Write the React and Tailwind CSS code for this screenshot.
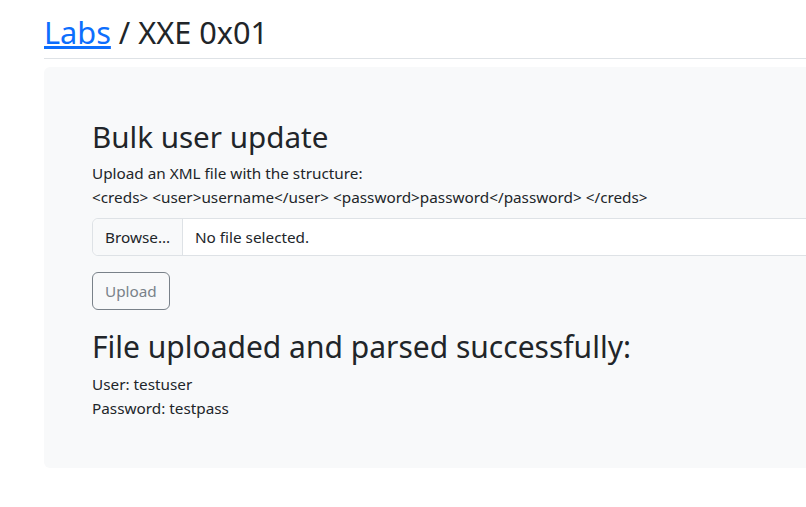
export default function App() {
  return (
    <div className="w-[806px] h-[507px] overflow-hidden bg-white text-[#212529]" style={{ fontFamily: '"Noto Sans", sans-serif' }}>
      <div className="ml-[44px] w-[1100px] pt-[12px]">
        <h3 className="text-[30.7px] leading-[40px] font-normal">
          <a href="#" className="text-[#0d6efd] underline">Labs</a> / XXE 0x01
        </h3>
        <div className="mt-[6px] h-px bg-[#dee2e6]" />
        <div className="mt-[8px] h-[401px] rounded-md bg-[#f8f9fa] px-[48px] pt-[50px]">
          <h2 className="text-[29.6px] leading-[40px]">Bulk user update</h2>
          <p className="mt-[4px] text-[15.3px] leading-[24px]">Upload an XML file with the structure:</p>
          <p className="text-[15.3px] leading-[24px]">{"<creds> <user>username</user> <password>password</password> </creds>"}</p>
          <div className="mt-[9px] flex h-[38px] rounded-md border border-[#dee2e6] bg-white text-[15.3px]">
            <div className="flex items-center rounded-l-md border-r border-[#dee2e6] bg-[#f8f9fa] px-[12px]">Browse…</div>
            <div className="flex items-center px-[12px]">No file selected.</div>
          </div>
          <button className="mt-[16px] h-[38px] rounded-md border border-[#6c757d] px-[12px] text-[15.3px] text-[#6c757d] opacity-90">Upload</button>
          <h3 className="mt-[17px] text-[30px] leading-[40px]">File uploaded and parsed successfully:</h3>
          <p className="mt-[5px] text-[15.3px] leading-[24px]">User: testuser</p>
          <p className="text-[15.3px] leading-[24px]">Password: testpass</p>
        </div>
      </div>
    </div>
  );
}
